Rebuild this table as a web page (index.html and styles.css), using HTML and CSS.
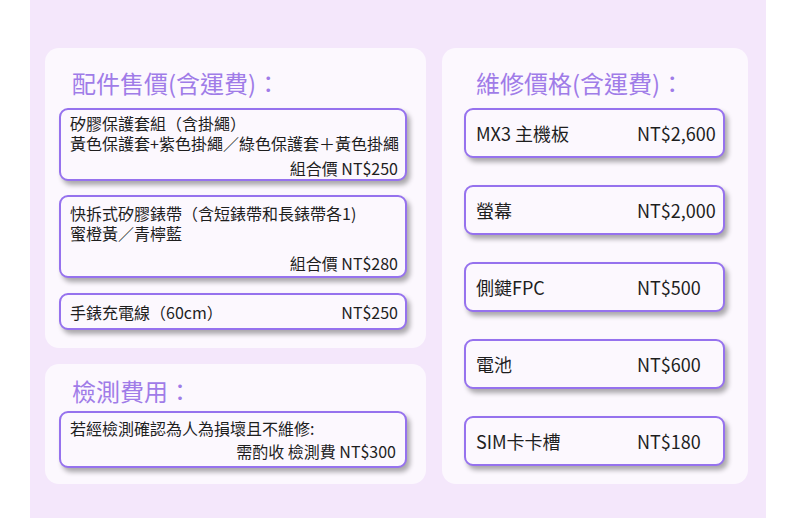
FILE: index.html
```html
<!DOCTYPE html>
<html lang="zh-Hant">
<head>
<meta charset="utf-8">
<link rel="stylesheet" href="styles.css">
</head>
<body>
<div class="page">
  <div class="col-left">
    <section class="card card-acc">
      <h2 class="title">配件售價(含運費)：</h2>
      <div class="item item-a">
        <div class="line">矽膠保護套組（含掛繩）</div>
        <div class="line">黃色保護套+紫色掛繩／綠色保護套＋黃色掛繩</div>
        <div class="line price-r mt5">組合價 NT$250</div>
      </div>
      <div class="item item-b">
        <div class="line">快拆式矽膠錶帶（含短錶帶和長錶帶各1)</div>
        <div class="line">蜜橙黃／青檸藍</div>
        <div class="line price-r mt10">組合價 NT$280</div>
      </div>
      <div class="item item-c">
        <span>手錶充電線（60cm）</span>
        <span>NT$250</span>
      </div>
    </section>
    <section class="card card-test">
      <h2 class="title">檢測費用：</h2>
      <div class="item item-d">
        <div class="line">若經檢測確認為人為損壞且不維修:</div>
        <div class="line price-r mt3">需酌收 檢測費 NT$300</div>
      </div>
    </section>
  </div>
  <section class="card card-repair">
    <h2 class="title title-r">維修價格(含運費)：</h2>
    <div class="rlist">
      <div class="ritem"><span>MX3 主機板</span><span>NT$2,600</span></div>
      <div class="ritem"><span>螢幕</span><span>NT$2,000</span></div>
      <div class="ritem"><span>側鍵FPC</span><span>NT$500</span></div>
      <div class="ritem"><span>電池</span><span>NT$600</span></div>
      <div class="ritem"><span>SIM卡卡槽</span><span>NT$180</span></div>
    </div>
  </section>
</div>
</body>
</html>
```

FILE: styles.css
```css
* { box-sizing: border-box; margin: 0; padding: 0; }
html, body { background: #ffffff; }
body {
  font-family: "Noto Sans CJK TC", "Noto Sans", sans-serif;
  color: #1e1e1e;
}
.page {
  margin-left: 30px;
  width: 736px;
  height: 518px;
  background: #f4e7fb;
  padding: 48px 18px 0 15px;
  display: flex;
  gap: 16px;
  align-items: flex-start;
}
.col-left {
  width: 381px;
  display: flex;
  flex-direction: column;
  gap: 16px;
}
.card {
  background: #fcf8fe;
  border-radius: 14px;
}
.card-acc { padding: 18px 19px 18px 14px; height: 300px; }
.card-test { padding: 10px 19px 16px 14px; height: 120px; }
.card-repair { width: 306px; height: 436px; padding: 18px 23px 0 22px; }
.title {
  font-weight: 400;
  font-size: 24px;
  line-height: 34px;
  color: #a07ce8;
  padding-left: 13px;
  margin-bottom: 8px;
}
.card-test .title { margin-bottom: 3px; }
.title-r { padding-left: 12px; }
.item {
  border: 2px solid #9672ee;
  border-radius: 9px;
  background: #fcf8fe;
  box-shadow: 3px 4px 5px rgba(0, 0, 0, 0.33);
  font-size: 16px;
  line-height: 20px;
  padding-left: 9px;
  padding-right: 7px;
}
.item + .item { margin-top: 14px; }
.item-a { padding-top: 3px; padding-bottom: 1px; }
.item-b { padding-top: 6px; padding-bottom: 3px; }
.item-c {
  margin-top: 15px !important;
  padding-top: 7px;
  padding-bottom: 6px;
  display: flex;
  justify-content: space-between;
}
.item-d { padding-top: 5px; padding-bottom: 5px; padding-right: 9px; }
.line { white-space: nowrap; }
.price-r { text-align: right; }
.mt3 { margin-top: 3px; }
.mt5 { margin-top: 5px; }
.mt10 { margin-top: 10px; }
.rlist {
  margin-top: 8px;
  display: flex;
  flex-direction: column;
  gap: 27px;
}
.ritem {
  height: 50px;
  border: 2px solid #9672ee;
  border-radius: 9px;
  background: #fcf8fe;
  box-shadow: 3px 4px 5px rgba(0, 0, 0, 0.33);
  font-size: 18px;
  display: grid;
  grid-template-columns: 161px 1fr;
  align-items: center;
  padding-left: 10px;
}
```
